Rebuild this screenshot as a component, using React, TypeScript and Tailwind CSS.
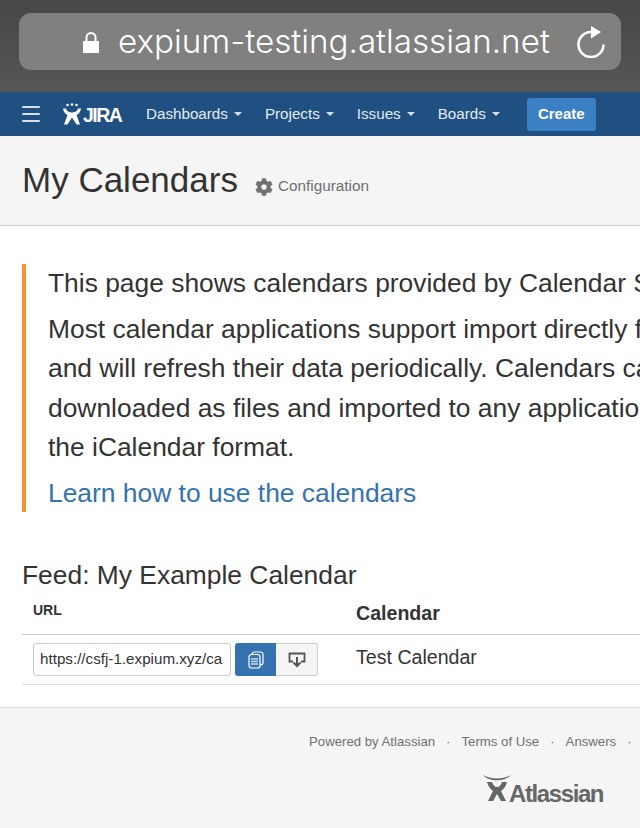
import { Menu } from "lucide-react";
import { FaCog } from "react-icons/fa";

const navItems = ["Dashboards", "Projects", "Issues", "Boards"];

function JiraLogo() {
  return (
    <svg width="18" height="22" viewBox="0 0 18 22" fill="white" className="shrink-0">
      <circle cx="4.500" cy="2" r="1.300" />
      <circle cx="9" cy="1.500" r="1.300" />
      <circle cx="13.500" cy="2" r="1.300" />
      <path d="M0 5.500h2.800c1 2.800 3 4 6.200 4s5.200-1.200 6.200-4H18c-.5 3.300-2 5.300-4.500 6.500L17 21.500h-3.400L9 14.500l-4.600 7H1l3.500-9.500C2 10.800.5 8.800 0 5.500z" />
    </svg>
  );
}

function AtlassianMark() {
  return (
    <svg width="28" height="27" viewBox="0 0 28 27" fill="#666666" className="shrink-0">
      <path d="M0 0c8 4.500 20 4.500 28 0-6 7-22 7-28 0z" />
      <path d="M4 7h5c1 3 3 5 5 5s4-2 5-5h5c-1 4-3 7-6 9l5 10h-5l-4-7-4 7H5l5-10C7 14 5 11 4 7z" />
    </svg>
  );
}

export default function App() {
  return (
    <div className="h-[828px] w-[640px] overflow-hidden bg-white font-['Liberation_Sans',sans-serif] text-[#333333]">
      {/* browser bar */}
      <div className="flex h-[92px] items-start bg-gradient-to-b from-[#474747] to-[#565656] px-[19px] pt-[13px]">
        <div className="flex h-[57px] w-full items-center rounded-[12px] bg-[#808080] pl-[64px] pr-[14px] text-white">
          <svg width="16" height="22" viewBox="0 0 16 22" className="mr-[19px] shrink-0">
            <rect x="0" y="10" width="16" height="12" fill="white" />
            <path d="M3.500 11V6.500a4.500 4.500 0 0 1 9 0V11" fill="none" stroke="white" strokeWidth="2" />
          </svg>
          <span className="font-['Inter',sans-serif] text-[33.200px] font-light leading-none">expium-testing.atlassian.net</span>
          <svg width="30" height="33" viewBox="0 0 30 33" fill="none" className="ml-auto shrink-0">
            <path d="M14 7A12.500 12.500 0 1 0 26.500 19.500" stroke="white" strokeWidth="2.600" />
            <path d="M14 1l10 6-10 6.500z" fill="white" />
          </svg>
        </div>
      </div>

      {/* jira nav */}
      <div className="flex h-[44px] items-center bg-[#205081] pl-[19px] text-white">
        <Menu size={24} strokeWidth={2} className="shrink-0 text-[#d6e0ea]" />
        <div className="ml-[20px] flex w-[60px] items-center">
          <JiraLogo />
          <span className="ml-[2px] mt-[3px] text-[19.500px] font-bold leading-none tracking-[-1.500px]">JIRA</span>
        </div>
        <div className="ml-[23px] flex items-center gap-[23px] text-[15.200px] text-[#e4ebf2]">
          {navItems.map((item) => (
            <div key={item} className="flex items-center gap-[6px]">
              <span>{item}</span>
              <span className="mt-[1px] h-0 w-0 border-x-[4px] border-t-[4px] border-x-transparent border-t-[#d6e0ea]"></span>
            </div>
          ))}
        </div>
        <button className="ml-[27px] h-[33px] w-[69px] rounded-[3px] bg-[#3b7fc4] text-[15px] font-bold text-white">Create</button>
      </div>

      {/* page header */}
      <div className="flex h-[90px] items-center border-b border-[#cccccc] bg-[#f5f5f5] pb-[2px] pl-[22px]">
        <h1 className="text-[35px] font-normal leading-none">My Calendars</h1>
        <FaCog size={18} className="ml-[17px] mt-[14px] text-[#707070]" />
        <span className="ml-[5px] mt-[14px] text-[15.300px] text-[#707070]">Configuration</span>
      </div>

      {/* info text */}
      <div className="ml-[22px] mt-[38px] h-[248px] w-[800px] border-l-[4px] border-[#f79232] pl-[22px] text-[26.400px] leading-[39.500px]">
        <p className="mb-[6px] whitespace-nowrap">This page shows calendars provided by Calendar Sharing.</p>
        <p className="whitespace-nowrap">Most calendar applications support import directly from URL</p>
        <p className="whitespace-nowrap">and will refresh their data periodically. Calendars can also be</p>
        <p className="whitespace-nowrap">downloaded as files and imported to any application that reads</p>
        <p className="whitespace-nowrap">the iCalendar format.</p>
        <a className="mt-[6px] block text-[#3572b0]">Learn how to use the calendars</a>
      </div>

      {/* feed */}
      <div className="mt-[45px] pl-[22px]">
        <h2 className="text-[26.400px] font-normal leading-[36px]">Feed: My Example Calendar</h2>
        <div className="flex h-[42px] border-b border-[#cccccc]">
          <div className="w-[334px] pl-[11px] pt-[7px] text-[14px] font-bold">URL</div>
          <div className="pt-[6px] text-[19.600px] font-bold">Calendar</div>
        </div>
        <div className="flex h-[50px] items-center border-b border-[#dddddd]">
          <div className="ml-[11px] flex h-[33px] w-[198px] items-center overflow-hidden rounded-[3px] border border-[#cccccc] pl-[6px] text-[15.200px] whitespace-nowrap">
            https://csfj-1.expium.xyz/ca
          </div>
          <div className="ml-[4px] flex h-[33px] w-[41px] items-center justify-center rounded-l-[3px] bg-[#3572b0]">
            <svg width="18" height="18" viewBox="0 0 18 18" fill="none" stroke="white" strokeWidth="1.200">
              <rect x="5" y="1" width="11" height="13" rx="2.500" />
              <rect x="2" y="3.500" width="11" height="13.500" rx="2.500" fill="#3572b0" />
              <path d="M4 8h7M4 10.500h7M4 13h7" strokeWidth="1.500" stroke="#c7d9ec" />
            </svg>
          </div>
          <div className="flex h-[33px] w-[42px] items-center justify-center rounded-r-[3px] border border-l-0 border-[#cccccc] bg-[#f5f5f5]">
            <svg width="18" height="16" viewBox="0 0 18 16" fill="none" stroke="#555555" strokeWidth="1.800">
              <path d="M5 9.500H1.500V1.500h15v8H13" />
              <path d="M9 5v9M5.500 10.500 9 14l3.500-3.500" strokeWidth="2" />
            </svg>
          </div>
          <div className="mb-[4px] ml-[38px] text-[19.600px]">Test Calendar</div>
        </div>
      </div>

      {/* footer */}
      <div className="mt-[22px] h-[122px] border-t border-[#dddddd] bg-[#f5f5f5] pt-[26px]">
        <div className="flex items-center whitespace-nowrap pl-[309px] text-[13.200px] leading-[16px] text-[#707070]">
          <span>Powered by Atlassian</span>
          <span className="mx-[11px]">·</span>
          <span>Terms of Use</span>
          <span className="mx-[11px]">·</span>
          <span>Answers</span>
          <span className="ml-[11px]">·</span>
        </div>
        <div className="mt-[25px] flex items-end pl-[483px] text-[#666666]">
          <AtlassianMark />
          <span className="-mb-[4px] ml-[-2px] text-[24px] font-bold leading-[24px] tracking-[-1.400px]">Atlassian</span>
        </div>
      </div>
    </div>
  );
}
